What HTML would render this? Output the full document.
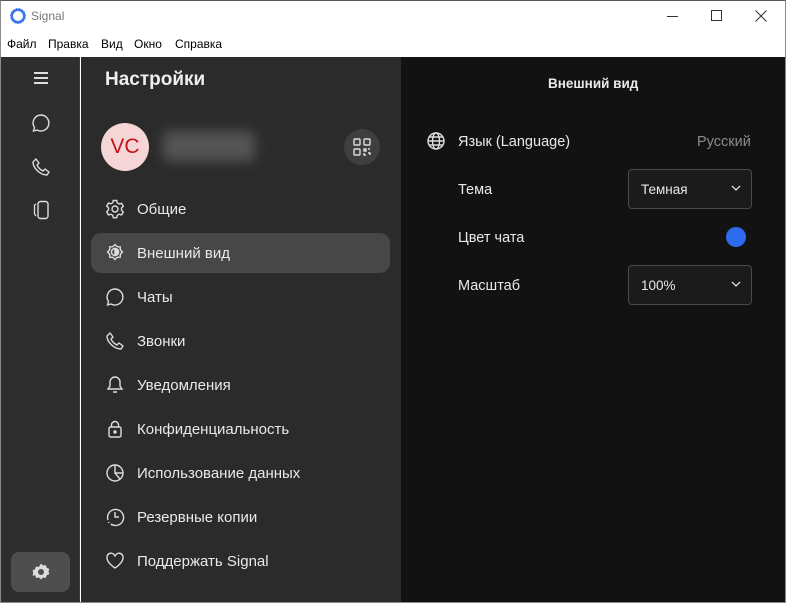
<!DOCTYPE html>
<html><head><meta charset="utf-8"><style>
*{margin:0;padding:0;box-sizing:border-box}
body{width:786px;height:603px;overflow:hidden;font-family:"Liberation Sans","Noto Sans CJK SC",sans-serif;background:#fff;position:relative}
.abs{position:absolute}
.win{left:0;top:0;width:786px;height:603px;border:1px solid #8a8a8a;border-top:1px solid #555}
.title{left:1px;top:1px;width:784px;height:31px;background:#fff}
.menu{left:1px;top:32px;width:784px;height:25px;background:#fff;font-size:12px;color:#000}
.menu span{position:absolute;top:5px}
.rail{left:1px;top:57px;width:79px;height:545px;background:#2e2e2e;border-right:1px solid #3a3a3a}
.side{left:81px;top:57px;width:320px;height:545px;background:#2b2b2b}
.main{left:401px;top:57px;width:384px;height:545px;background:#121212}
.t{color:#e9e9e9;font-size:15px;position:absolute;white-space:nowrap}
svg{position:absolute}
.sel{left:91px;top:233px;width:299px;height:40px;border-radius:10px;background:#474747}
.drop{position:absolute;width:124px;height:40px;border:1px solid #4a4a4a;border-radius:4px;background:#1b1b1b}
</style></head><body>
<div class="abs title">
<svg style="left:8px;top:6px" width="18" height="18" viewBox="0 0 18 18"><circle cx="9" cy="9" r="8" fill="#3a76f0"/><circle cx="9" cy="9" r="5" fill="#fff"/><circle cx="9" cy="9" r="8" fill="none" stroke="#fff" stroke-width="1" stroke-dasharray="2 1.3"/></svg>
<span class="abs" style="left:30px;top:8px;font-size:12px;color:#777">Signal</span>
<div class="abs" style="left:666px;top:15px;width:11px;height:1px;background:#333"></div>
<div class="abs" style="left:710px;top:9px;width:11px;height:11px;border:1px solid #333"></div>
<svg style="left:754px;top:9px" width="12" height="12"><path d="M0.5 0.5L11.5 11.5M11.5 0.5L0.5 11.5" stroke="#333"/></svg>
</div>
<div class="abs menu"><span style="left:6px">Файл</span><span style="left:47px">Правка</span><span style="left:100px">Вид</span><span style="left:133px">Окно</span><span style="left:174px">Справка</span></div>
<div class="abs rail">
<div class="abs" style="left:33px;top:15px;width:14px;height:2px;background:#ddd;box-shadow:0 5px 0 #ddd,0 10px 0 #ddd"></div>
<svg style="left:30px;top:56px" width="20" height="20" viewBox="0 0 20 20"><path d="M10 2a8 8 0 1 1-4 15l-3.5 1 1-3.5A8 8 0 0 1 10 2z" fill="none" stroke="#ddd" stroke-width="1.4"/></svg>
<svg style="left:30px;top:100px" width="20" height="20" viewBox="0 0 20 20"><path d="M5 2l3 4-2 2c1 2.5 3 4.5 6 6l2-2 4 3-2 3C9 18 2 11 2 5z" fill="none" stroke="#ddd" stroke-width="1.4" stroke-linejoin="round"/></svg>
<svg style="left:31px;top:143px" width="20" height="20" viewBox="0 0 20 20"><rect x="6" y="1.5" width="10" height="17" rx="2.5" fill="none" stroke="#ddd" stroke-width="1.4"/><path d="M4 4l-1.5 1v9l1.5 2" fill="none" stroke="#ddd" stroke-width="1.3"/></svg>
<div class="abs" style="left:10px;top:495px;width:59px;height:40px;border-radius:8px;background:#4e4e4e"></div>
<svg style="left:30px;top:505px" width="20" height="20" viewBox="0 0 20 20"><path d="M10 1.5l2 2 2.8-.5.9 2.7 2.6 1.2-.8 2.6.8 2.6-2.6 1.2-.9 2.7-2.8-.5-2 2-2-2-2.8.5-.9-2.7L1.5 13.6l.8-2.6-.8-2.6 2.6-1.2.9-2.7 2.8.5z" fill="#ddd"/><circle cx="10" cy="10" r="3" fill="#4e4e4e"/></svg>
</div>
<div class="abs side">
<div class="t" style="left:24px;top:12px;font-size:19px;font-weight:bold;color:#eee">Настройки</div>
<div class="abs" style="left:20px;top:66px;width:48px;height:48px;border-radius:50%;background:#f5d5d5;color:#c0141a;font-size:21px;text-align:center;line-height:48px">VC</div>
<div class="abs" style="left:82px;top:74px;width:92px;height:30px;background:#555;filter:blur(6px);border-radius:6px"></div>
<div class="abs" style="left:263px;top:72px;width:36px;height:36px;border-radius:50%;background:#3f3f3f"></div>
<svg style="left:272px;top:81px" width="18" height="18" viewBox="0 0 18 18" fill="none" stroke="#ddd" stroke-width="1.4"><rect x="1" y="1" width="6" height="6" rx="1"/><rect x="11" y="1" width="6" height="6" rx="1"/><rect x="1" y="11" width="6" height="6" rx="1"/><path d="M11 11h2v2h-2zM15 11h2M15 15h2v2M11 15v2h2"/></svg>
</div>
<div class="abs sel"></div>
<svg style="left:105px;top:199px" width="20" height="20" viewBox="0 0 20 20" fill="none" stroke="#ddd" stroke-width="1.4"><path d="M8.3 1.5h3.4l.6 2.4 1.9 1.1 2.4-.7 1.7 3-1.8 1.7v2.2l1.8 1.7-1.7 3-2.4-.7-1.9 1.1-.6 2.4H8.3l-.6-2.4-1.9-1.1-2.4.7-1.7-3L3.5 11V8.8L1.7 7.1l1.7-3 2.4.7 1.9-1.1z"/><circle cx="10" cy="10" r="3"/></svg>
<div class="t" style="left:137px;top:201px">Общие</div>
<svg style="left:105px;top:243px" width="20" height="20" viewBox="0 0 20 20" fill="none" stroke="#ddd" stroke-width="1.4"><path d="M10 1.5l2.2 2.2 3 .1.1 3L17.5 9l-2.2 2.2-.1 3-3 .1L10 16.5l-2.2-2.2-3-.1-.1-3L2.5 9l2.2-2.2.1-3 3-.1z"/><circle cx="10" cy="9" r="3.5"/><path d="M10 5.5a3.5 3.5 0 0 1 0 7z" fill="#ddd"/></svg>
<div class="t" style="left:137px;top:245px">Внешний вид</div>
<svg style="left:105px;top:287px" width="20" height="20" viewBox="0 0 20 20"><path d="M10 2a8 8 0 1 1-4 15l-3.5 1 1-3.5A8 8 0 0 1 10 2z" fill="none" stroke="#ddd" stroke-width="1.4"/></svg>
<div class="t" style="left:137px;top:289px">Чаты</div>
<svg style="left:105px;top:331px" width="20" height="20" viewBox="0 0 20 20"><path d="M5 2l3 4-2 2c1 2.5 3 4.5 6 6l2-2 4 3-2 3C9 18 2 11 2 5z" fill="none" stroke="#ddd" stroke-width="1.4" stroke-linejoin="round"/></svg>
<div class="t" style="left:137px;top:333px">Звонки</div>
<svg style="left:105px;top:375px" width="20" height="20" viewBox="0 0 20 20" fill="none" stroke="#ddd" stroke-width="1.4"><path d="M10 2a5 5 0 0 0-5 5v4l-2 3h14l-2-3V7a5 5 0 0 0-5-5zM8 17h4"/></svg>
<div class="t" style="left:137px;top:377px">Уведомления</div>
<svg style="left:105px;top:419px" width="20" height="20" viewBox="0 0 20 20" fill="none" stroke="#ddd" stroke-width="1.4"><rect x="4" y="8" width="12" height="10" rx="1.5"/><path d="M6.5 8V6a3.5 3.5 0 0 1 7 0v2"/><circle cx="10" cy="13" r="1" fill="#ddd"/></svg>
<div class="t" style="left:137px;top:421px">Конфиденциальность</div>
<svg style="left:105px;top:463px" width="20" height="20" viewBox="0 0 20 20" fill="none" stroke="#ddd" stroke-width="1.4"><circle cx="10" cy="10" r="8"/><path d="M10 2v8h8M10 10l5 6"/></svg>
<div class="t" style="left:137px;top:465px">Использование данных</div>
<svg style="left:105px;top:507px" width="20" height="20" viewBox="0 0 20 20" fill="none" stroke="#ddd" stroke-width="1.4"><path d="M3 13a8 8 0 1 1 3 4" /><path d="M6 17.5l1 .5M3.5 15l.5 1" stroke-dasharray="1.5 1.5"/><path d="M10 5v5h4"/></svg>
<div class="t" style="left:137px;top:509px">Резервные копии</div>
<svg style="left:105px;top:551px" width="20" height="20" viewBox="0 0 20 20" fill="none" stroke="#ddd" stroke-width="1.4"><path d="M10 17S2 12 2 7a4 4 0 0 1 8-1.5A4 4 0 0 1 18 7c0 5-8 10-8 10z"/></svg>
<div class="t" style="left:137px;top:553px">Поддержать Signal</div>
<div class="abs main">
<div class="t" style="left:147px;top:19px;font-size:13.5px;font-weight:bold">Внешний вид</div>
<svg style="left:25px;top:74px" width="20" height="20" viewBox="0 0 20 20" fill="none" stroke="#ddd" stroke-width="1.4"><circle cx="10" cy="10" r="8"/><ellipse cx="10" cy="10" rx="3.5" ry="8"/><path d="M2 10h16M3.5 6h13M3.5 14h13"/></svg>
<div class="t" style="left:57px;top:77px;font-size:14.5px">Язык (Language)</div>
<div class="t" style="left:296px;top:77px;font-size:14.5px;color:#8a8a8a">Русский</div>
<div class="t" style="left:57px;top:125px;font-size:14.5px">Тема</div>
<div class="drop" style="left:227px;top:112px"><span class="t" style="left:12px;top:12px;font-size:13.5px">Темная</span><svg style="left:102px;top:15px" width="10" height="7"><path d="M1 1l4 4 4-4" fill="none" stroke="#ddd" stroke-width="1.3"/></svg></div>
<div class="t" style="left:57px;top:173px;font-size:14.5px">Цвет чата</div>
<div class="abs" style="left:325px;top:170px;width:20px;height:20px;border-radius:50%;background:#2c6bed"></div>
<div class="t" style="left:57px;top:221px;font-size:14.5px">Масштаб</div>
<div class="drop" style="left:227px;top:208px"><span class="t" style="left:12px;top:12px;font-size:13.5px">100%</span><svg style="left:102px;top:15px" width="10" height="7"><path d="M1 1l4 4 4-4" fill="none" stroke="#ddd" stroke-width="1.3"/></svg></div>
</div>
<div class="abs win" style="pointer-events:none"></div>
</body></html>
